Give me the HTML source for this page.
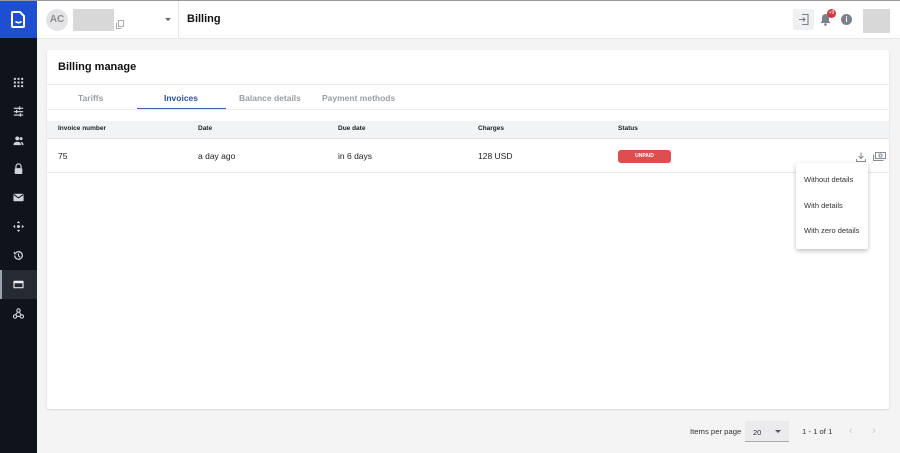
<!DOCTYPE html>
<html><head><style>
*{box-sizing:border-box;margin:0;padding:0}
body{width:900px;height:452px;overflow:hidden;background:#f4f4f5;font-family:"Liberation Sans",Arial,sans-serif;position:relative;border-top:1px solid #9a9a9a}
.side{position:absolute;left:0;top:0;width:37px;height:452px;background:#0f131b}
.logo{position:absolute;left:0;top:0;width:37px;height:37px;background:#1f4fd1}
.si{position:absolute;left:13px;width:11px;height:11px}
.hdr{position:absolute;left:37px;top:0;right:0;height:38px;background:#fff;border-bottom:1px solid #e6e6e6}
.card{position:absolute;left:47px;top:49px;width:842px;height:359px;background:#fff;border-radius:3px;box-shadow:0 1px 2px rgba(0,0,0,.12)}
.t{position:absolute;white-space:nowrap}
</style></head><body>
<div class="side">
 <div class="logo"><svg style="position:absolute;left:11px;top:10px" width="15" height="17" viewBox="0 0 15 17"><path d="M2 1h7l4 4v10a1 1 0 0 1-1 1H2a1 1 0 0 1-1-1V2a1 1 0 0 1 1-1z" fill="none" stroke="#fff" stroke-width="2"/><path d="M4.5 10.5q3 2.5 6 0" fill="none" stroke="#fff" stroke-width="1.6"/></svg></div>
 <svg class="si" style="top:76px" viewBox="0 0 13 13" fill="#cfd3da"><g><rect x="1" y="1" width="2.4" height="2.4"/><rect x="5.3" y="1" width="2.4" height="2.4"/><rect x="9.6" y="1" width="2.4" height="2.4"/><rect x="1" y="5.3" width="2.4" height="2.4"/><rect x="5.3" y="5.3" width="2.4" height="2.4"/><rect x="9.6" y="5.3" width="2.4" height="2.4"/><rect x="1" y="9.6" width="2.4" height="2.4"/><rect x="5.3" y="9.6" width="2.4" height="2.4"/><rect x="9.6" y="9.6" width="2.4" height="2.4"/></g></svg>
 <svg class="si" style="top:105px" viewBox="0 0 13 13" fill="#cfd3da"><rect x="1" y="2" width="11" height="1.4"/><rect x="1" y="6" width="11" height="1.4"/><rect x="1" y="10" width="11" height="1.4"/><rect x="7" y="0.5" width="1.5" height="4"/><rect x="3.5" y="4.5" width="1.5" height="4"/><rect x="8" y="8.5" width="1.5" height="4"/></svg>
 <svg class="si" style="top:134px" viewBox="0 0 13 13" fill="#cfd3da"><circle cx="5" cy="4" r="2.3"/><circle cx="9.5" cy="4.3" r="1.8"/><path d="M0.5 12q0-4 4.5-4t4.5 4z"/><path d="M9 8q3.5 0 3.5 4h-2q0-2.5-1.5-4z"/></svg>
 <svg class="si" style="top:162px" viewBox="0 0 13 13" fill="#cfd3da"><path d="M3.5 6V4a3 3 0 0 1 6 0v2" fill="none" stroke="#cfd3da" stroke-width="1.4"/><rect x="2" y="6" width="9" height="7" rx="1"/></svg>
 <svg class="si" style="top:191px" viewBox="0 0 13 13"><rect x="0.5" y="2" width="12" height="9" rx="1" fill="#cfd3da"/><path d="M1 3l5.5 4 5.5-4" fill="none" stroke="#0f131b" stroke-width="1.2"/></svg>
 <svg class="si" style="top:220px" viewBox="0 0 13 13" fill="#cfd3da"><path d="M6.5 0l2 2.5h-4zM6.5 13l2-2.5h-4zM0 6.5l2.5-2v4zM13 6.5l-2.5-2v4z"/><circle cx="6.5" cy="6.5" r="1.8"/></svg>
 <svg class="si" style="top:249px" viewBox="0 0 13 13"><path d="M2 6.5a4.5 4.5 0 1 0 1.3-3.2" fill="none" stroke="#cfd3da" stroke-width="1.5"/><path d="M1 1.5v3.5h3.5z" fill="#cfd3da"/><path d="M6.5 4v3l2 1.5" fill="none" stroke="#cfd3da" stroke-width="1.3"/></svg>
 <div style="position:absolute;left:0;top:269px;width:37px;height:29px;background:#252a33;border-left:2px solid #9ba3b0"></div>
 <svg class="si" style="top:278px" viewBox="0 0 13 13"><rect x="0.5" y="2" width="12" height="9" rx="1" fill="#eef0f3"/><rect x="1.8" y="5" width="9.4" height="4.7" fill="#252a33"/></svg>
 <svg class="si" style="top:307px" viewBox="0 0 13 13" fill="none" stroke="#cfd3da" stroke-width="1.3"><circle cx="6.5" cy="3" r="2"/><circle cx="2.5" cy="10" r="2"/><circle cx="10.5" cy="10" r="2"/><path d="M5.5 5l-2.5 3M4.5 10h4M7.5 5l2 3"/></svg>
</div>
<div class="hdr">
 <div style="position:absolute;left:9px;top:8px;width:22px;height:22px;border-radius:50%;background:#e4e4e6;color:#8a8d93;font-size:10px;font-weight:bold;text-align:center;line-height:22px">AC</div>
 <div style="position:absolute;left:36px;top:8px;width:41px;height:22px;background:#d8d8d8"></div>
 <svg style="position:absolute;left:79px;top:19px" width="8" height="9" viewBox="0 0 8 9" fill="none" stroke="#aaa" stroke-width="1"><rect x="2.5" y="0.5" width="5" height="6"/><path d="M0.5 2.5v6h5"/></svg>
 <div style="position:absolute;left:128px;top:17px;border:3px solid transparent;border-top:3px solid #666"></div>
 <div style="position:absolute;left:141px;top:0;width:1px;height:38px;background:#e6e6e6"></div>
 <div class="t" style="left:150px;top:12px;font-size:11px;font-weight:bold;color:#111">Billing</div>
 <div style="position:absolute;left:756px;top:8px;width:21px;height:21px;background:#eef0f2;border-radius:2px"></div>
 <svg style="position:absolute;left:761px;top:13px" width="11" height="11" viewBox="0 0 11 11" fill="none" stroke="#7b818b" stroke-width="1.1"><path d="M4 0.5h6v10H4"/><path d="M1 5.5h6M5 3.5l2 2-2 2"/></svg>
 <svg style="position:absolute;left:783px;top:12px" width="11" height="13" viewBox="0 0 11 13" fill="#7b818b"><path d="M5.5 1a3.5 3.5 0 0 1 3.5 3.5V8l1.5 2H0.5L2 8V4.5A3.5 3.5 0 0 1 5.5 1z"/><circle cx="5.5" cy="11.5" r="1.3"/></svg>
 <div style="position:absolute;left:790px;top:8px;width:9px;height:9px;border-radius:50%;background:#d9363e;color:#fff;font-size:5px;text-align:center;line-height:9px">+9</div>
 <div style="position:absolute;left:804px;top:13px;width:11px;height:11px;border-radius:50%;background:#7b818b;color:#fff;font-size:8px;font-weight:bold;text-align:center;line-height:11px">i</div>
 <div style="position:absolute;left:826px;top:8px;width:27px;height:24px;background:#d8d8d8"></div>
</div>
<div class="card">
 <div class="t" style="left:11px;top:11px;font-size:11px;font-weight:bold;color:#111">Billing manage</div>
 <div style="position:absolute;left:0;right:0;top:34px;height:1px;background:#ebebeb"></div>
 <div class="t" style="left:31px;top:43px;font-size:8.5px;font-weight:bold;color:#9a9ea5">Tariffs</div>
 <div class="t" style="left:117px;top:43px;font-size:8.5px;font-weight:bold;color:#2f50b0">Invoices</div>
 <div style="position:absolute;left:90px;top:58px;width:89px;height:2px;background:#3e5ab8"></div>
 <div class="t" style="left:192px;top:43px;font-size:8.5px;font-weight:bold;color:#9a9ea5">Balance details</div>
 <div class="t" style="left:275px;top:43px;font-size:8.5px;font-weight:bold;color:#9a9ea5">Payment methods</div>
 <div style="position:absolute;left:0;right:0;top:59px;height:1px;background:#ebebeb"></div>
 <div style="position:absolute;left:0;right:0;top:71px;height:18px;background:#f2f3f5;border-bottom:1px solid #e6e6e6"></div>
 <div class="t" style="left:11px;top:75px;font-size:6.5px;font-weight:bold;color:#222">Invoice number</div>
 <div class="t" style="left:151px;top:75px;font-size:6.5px;font-weight:bold;color:#222">Date</div>
 <div class="t" style="left:291px;top:75px;font-size:6.5px;font-weight:bold;color:#222">Due date</div>
 <div class="t" style="left:431px;top:75px;font-size:6.5px;font-weight:bold;color:#222">Charges</div>
 <div class="t" style="left:571px;top:75px;font-size:6.5px;font-weight:bold;color:#222">Status</div>
 <div class="t" style="left:11px;top:101px;font-size:8.5px;color:#222">75</div>
 <div class="t" style="left:151px;top:101px;font-size:8.5px;color:#222">a day ago</div>
 <div class="t" style="left:291px;top:101px;font-size:8.5px;color:#222">in 6 days</div>
 <div class="t" style="left:431px;top:101px;font-size:8.5px;color:#222">128 USD</div>
 <div style="position:absolute;left:571px;top:100px;width:53px;height:13px;background:#df4e4e;border-radius:3px;color:#fff;font-size:5px;font-weight:bold;text-align:center;line-height:13px">UNPAID</div>
 <svg style="position:absolute;left:809px;top:102px" width="10" height="10" viewBox="0 0 10 10" fill="none" stroke="#8a8f96" stroke-width="1.1"><path d="M5 0.5v6M2.5 4l2.5 2.5L7.5 4M0.5 7v2.5h9V7"/></svg>
 <svg style="position:absolute;left:826px;top:102px" width="13" height="9" viewBox="0 0 13 9" fill="none" stroke="#8a8f96" stroke-width="1.1"><rect x="2.5" y="0.5" width="10" height="6"/><path d="M0.5 2.5v6h10"/><circle cx="7.5" cy="3.5" r="1.5"/></svg>
 <div style="position:absolute;left:0;right:0;top:122px;height:1px;background:#ebebeb"></div>
</div>
<div style="position:absolute;left:796px;top:162px;width:72px;height:86px;background:#fff;border-radius:2px;box-shadow:0 2px 5px rgba(0,0,0,.25)">
 <div class="t" style="left:8px;top:12px;font-size:7.5px;color:#333">Without details</div>
 <div class="t" style="left:8px;top:38px;font-size:7.5px;color:#333">With details</div>
 <div class="t" style="left:8px;top:63px;font-size:7.5px;color:#333">With zero details</div>
</div>
<div class="t" style="left:690px;top:426px;font-size:7.7px;color:#333">Items per page</div>
<div style="position:absolute;left:745px;top:420px;width:44px;height:21px;background:#ebebed;border-bottom:1px solid #aaa"></div>
<div class="t" style="left:753px;top:427px;font-size:7.5px;color:#333">20</div>
<div style="position:absolute;left:775px;top:429px;border:3px solid transparent;border-top:3px solid #555"></div>
<div class="t" style="left:802px;top:426px;font-size:7.7px;color:#333">1 - 1 of 1</div>
<div class="t" style="left:849px;top:424px;font-size:11px;color:#c8c8c8">‹</div>
<div class="t" style="left:872px;top:424px;font-size:11px;color:#c8c8c8">›</div>
</body></html>
